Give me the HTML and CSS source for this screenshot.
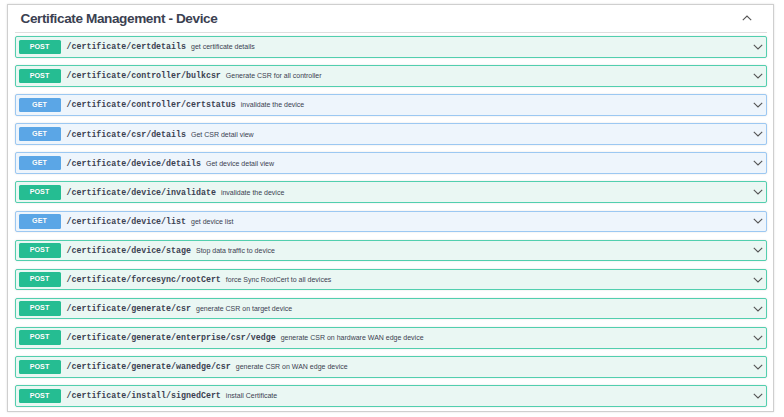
FILE: index.html
```html
<html>
  <head>
    <title>Certificate Management - Device</title>
    <meta name="viewport" content="width=device-width, initial-scale=1" />
    <link rel="stylesheet" href="styles.css">
  </head>
  <body>
    <div class="tag-section">
      <div class="tag-head">
        <h4 class="tag-title">Certificate Management - Device</h4>
        <svg class="arrow" width="10" height="6" viewBox="0 0 10 6"><path d="M0.8 5.2 L5 1 L9.2 5.2" /></svg>
      </div>
      <div class="ops">
        <div class="op post">
          <span class="method">POST</span>
          <span class="path">/certificate/certdetails</span>
          <span class="desc">get certificate details</span>
          <svg class="arrow" width="10" height="6" viewBox="0 0 10 6"><path d="M0.8 0.8 L5 5 L9.2 0.8" /></svg>
        </div>
        <div class="op post">
          <span class="method">POST</span>
          <span class="path">/certificate/controller/bulkcsr</span>
          <span class="desc">Generate CSR for all controller</span>
          <svg class="arrow" width="10" height="6" viewBox="0 0 10 6"><path d="M0.8 0.8 L5 5 L9.2 0.8" /></svg>
        </div>
        <div class="op get">
          <span class="method">GET</span>
          <span class="path">/certificate/controller/certstatus</span>
          <span class="desc">invalidate the device</span>
          <svg class="arrow" width="10" height="6" viewBox="0 0 10 6"><path d="M0.8 0.8 L5 5 L9.2 0.8" /></svg>
        </div>
        <div class="op get">
          <span class="method">GET</span>
          <span class="path">/certificate/csr/details</span>
          <span class="desc">Get CSR detail view</span>
          <svg class="arrow" width="10" height="6" viewBox="0 0 10 6"><path d="M0.8 0.8 L5 5 L9.2 0.8" /></svg>
        </div>
        <div class="op get">
          <span class="method">GET</span>
          <span class="path">/certificate/device/details</span>
          <span class="desc">Get device detail view</span>
          <svg class="arrow" width="10" height="6" viewBox="0 0 10 6"><path d="M0.8 0.8 L5 5 L9.2 0.8" /></svg>
        </div>
        <div class="op post">
          <span class="method">POST</span>
          <span class="path">/certificate/device/invalidate</span>
          <span class="desc">invalidate the device</span>
          <svg class="arrow" width="10" height="6" viewBox="0 0 10 6"><path d="M0.8 0.8 L5 5 L9.2 0.8" /></svg>
        </div>
        <div class="op get">
          <span class="method">GET</span>
          <span class="path">/certificate/device/list</span>
          <span class="desc">get device list</span>
          <svg class="arrow" width="10" height="6" viewBox="0 0 10 6"><path d="M0.8 0.8 L5 5 L9.2 0.8" /></svg>
        </div>
        <div class="op post">
          <span class="method">POST</span>
          <span class="path">/certificate/device/stage</span>
          <span class="desc">Stop data traffic to device</span>
          <svg class="arrow" width="10" height="6" viewBox="0 0 10 6"><path d="M0.8 0.8 L5 5 L9.2 0.8" /></svg>
        </div>
        <div class="op post">
          <span class="method">POST</span>
          <span class="path">/certificate/forcesync/rootCert</span>
          <span class="desc">force Sync RootCert to all devices</span>
          <svg class="arrow" width="10" height="6" viewBox="0 0 10 6"><path d="M0.8 0.8 L5 5 L9.2 0.8" /></svg>
        </div>
        <div class="op post">
          <span class="method">POST</span>
          <span class="path">/certificate/generate/csr</span>
          <span class="desc">generate CSR on target device</span>
          <svg class="arrow" width="10" height="6" viewBox="0 0 10 6"><path d="M0.8 0.8 L5 5 L9.2 0.8" /></svg>
        </div>
        <div class="op post">
          <span class="method">POST</span>
          <span class="path">/certificate/generate/enterprise/csr/vedge</span>
          <span class="desc">generate CSR on hardware WAN edge device</span>
          <svg class="arrow" width="10" height="6" viewBox="0 0 10 6"><path d="M0.8 0.8 L5 5 L9.2 0.8" /></svg>
        </div>
        <div class="op post">
          <span class="method">POST</span>
          <span class="path">/certificate/generate/wanedge/csr</span>
          <span class="desc">generate CSR on WAN edge device</span>
          <svg class="arrow" width="10" height="6" viewBox="0 0 10 6"><path d="M0.8 0.8 L5 5 L9.2 0.8" /></svg>
        </div>
        <div class="op post">
          <span class="method">POST</span>
          <span class="path">/certificate/install/signedCert</span>
          <span class="desc">install Certificate</span>
          <svg class="arrow" width="10" height="6" viewBox="0 0 10 6"><path d="M0.8 0.8 L5 5 L9.2 0.8" /></svg>
        </div>
      </div>
    </div>
  </body>
</html>
```

FILE: styles.css
```css
body {
  margin: 0;
  background: #fff;
  font-family: "Liberation Sans", Arial, sans-serif;
  color: #3b4151;
}
.tag-section {
  box-sizing: border-box;
  width: 767px;
  height: 408px;
  margin: 4px 0 0 7px;
  border: 1px solid #cfcfcf;
  box-shadow: 0 0 2px rgba(0, 0, 0, 0.12);
}
.tag-head {
  display: flex;
  align-items: center;
  box-sizing: border-box;
  height: 28px;
  margin: 0 6px 0 7px;
  padding: 0 15px 0 5.5px;
  border-bottom: 1px solid #dedede;
}
.tag-title {
  margin: 0;
  font-size: 13.6px;
  letter-spacing: -0.4px;
  font-weight: bold;
  color: #3b4151;
}
.tag-head .arrow {
  margin-left: auto;
  margin-top: -1px;
}
.arrow path {
  fill: none;
  stroke: #555;
  stroke-width: 1.1;
}
.ops {
  padding: 3px 6px 0 7px;
}
.op {
  display: flex;
  align-items: center;
  box-sizing: border-box;
  height: 21.6px;
  margin-bottom: 7.5px;
  padding: 0 3px 0 2.5px;
  border: 1px solid;
  border-radius: 2px;
  box-shadow: 0 0 2px rgba(0, 0, 0, 0.12);
}
.op.post {
  background: #eaf7f3;
  border-color: #52cfae;
}
.op.get {
  background: #eef5fc;
  border-color: #9cc8f2;
}
.method {
  box-sizing: border-box;
  width: 42px;
  height: 14.5px;
  line-height: 14.5px;
  border-radius: 1.5px;
  text-align: center;
  font-size: 7.2px;
  font-weight: bold;
  color: #fff;
  text-shadow: 0 0 1px rgba(0, 0, 0, 0.1);
}
.post .method {
  background: #25bd92;
}
.get .method {
  background: #5ba6e6;
}
.path {
  margin-left: 6px;
  font-family: "Liberation Mono", "Courier New", monospace;
  font-size: 8.3px;
  font-weight: bold;
  color: #3b4151;
}
.desc {
  margin-left: 5px;
  font-size: 7px;
  color: #3b4151;
}
.op .arrow {
  margin-left: auto;
}
```
